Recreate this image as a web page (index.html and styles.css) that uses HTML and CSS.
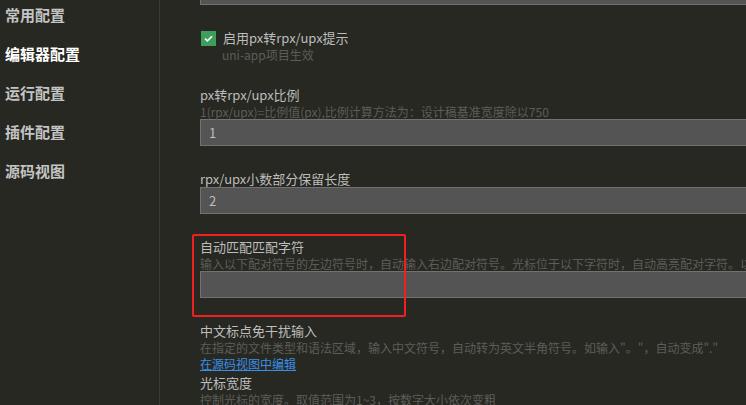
FILE: index.html
```html
<!DOCTYPE html>
<html lang="zh-CN">
<head>
  <meta charset="UTF-8">
  <title>设置</title>
  <link rel="stylesheet" href="styles.css">
</head>
<body>
  <div class="layout">
    <ul class="nav">
      <li>常用配置</li>
      <li class="active">编辑器配置</li>
      <li>运行配置</li>
      <li>插件配置</li>
      <li>源码视图</li>
    </ul>

    <div class="content">
      <div class="field">
        <div class="text-input"></div>
      </div>

      <div class="field">
        <label class="check-row">
          <span class="checkbox">
            <svg width="15" height="15" viewBox="0 0 15 15"><path d="M4 7.6 L6.4 9.8 L11 5.2" fill="none" stroke="#fff" stroke-width="1.6"/></svg>
          </span>
          <span class="label">启用px转rpx/upx提示</span>
        </label>
        <div class="desc indent">uni-app项目生效</div>
      </div>

      <div class="field">
        <div class="label">px转rpx/upx比例</div>
        <div class="desc">1(rpx/upx)=比例值(px),比例计算方法为：设计稿基准宽度除以750</div>
        <div class="text-input">1</div>
      </div>

      <div class="field">
        <div class="label">rpx/upx小数部分保留长度</div>
        <div class="text-input">2</div>
      </div>

      <div class="field marked">
        <div class="label">自动匹配匹配字符</div>
        <div class="desc">输入以下配对符号的左边符号时，自动输入右边配对符号。光标位于以下字符时，自动高亮配对字符。以</div>
        <div class="text-input"></div>
        <div class="mark"></div>
      </div>

      <div class="field">
        <div class="label">中文标点免干扰输入</div>
        <div class="desc">在指定的文件类型和语法区域，输入中文符号，自动转为英文半角符号。如输入"。"，自动变成"."</div>
        <a class="link" href="#">在源码视图中编辑</a>
      </div>

      <div class="field tight">
        <div class="label">光标宽度</div>
        <div class="desc">控制光标的宽度。取值范围为1~3，按数字大小依次变粗</div>
      </div>
    </div>
  </div>
</body>
</html>
```

FILE: styles.css
```css
html, body { margin: 0; height: 100%; }
body {
  background: #272822;
  font-family: "Noto Sans CJK SC", "Noto Sans", sans-serif;
  overflow: hidden;
}
.layout { display: flex; height: 100%; }

.nav {
  list-style: none; margin: 0; padding: 5px 0 0 5px;
  width: 154px; flex: none;
  border-right: 1px solid #3a3a34;
}
.nav li {
  font-size: 15px; line-height: 20px; font-weight: bold;
  color: #c4c4c4; margin-bottom: 19px; white-space: nowrap;
}
.nav li.active { color: #fff; }

.content {
  flex: none; width: 620px;
  padding-left: 40px; margin-top: -22px;
}
.field { position: relative; margin-bottom: 25px; }
.field.tight { margin-top: -21px; }

.label {
  font-size: 13px; line-height: 16px; color: #bdbdbd; white-space: nowrap;
}
.desc {
  font-size: 12px; line-height: 15px; color: #5d5d58; white-space: nowrap;
  margin-top: 1px;
}
.desc.indent { padding-left: 22px; margin-top: 1px; }

.text-input {
  box-sizing: border-box; height: 27px; width: 600px;
  background: #545454; border: 1px solid #727272;
  padding-left: 8px; font-size: 13px; line-height: 25px; color: #bdbdbd;
}
.desc + .text-input { margin-top: 0; }

.check-row { display: flex; align-items: center; gap: 7px; height: 16px; }
.checkbox {
  width: 15px; height: 15px; margin-left: 1px;
  background: #3d9f5b; display: flex;
}

.link {
  display: block; font-size: 12px; line-height: 15px;
  color: #3a8ee6; text-decoration: underline; margin-top: 1px;
}

.mark {
  position: absolute; left: -8px; top: -5px;
  width: 210px; height: 79px;
  border: 2.5px solid #f02020; border-radius: 2px;
}
```
